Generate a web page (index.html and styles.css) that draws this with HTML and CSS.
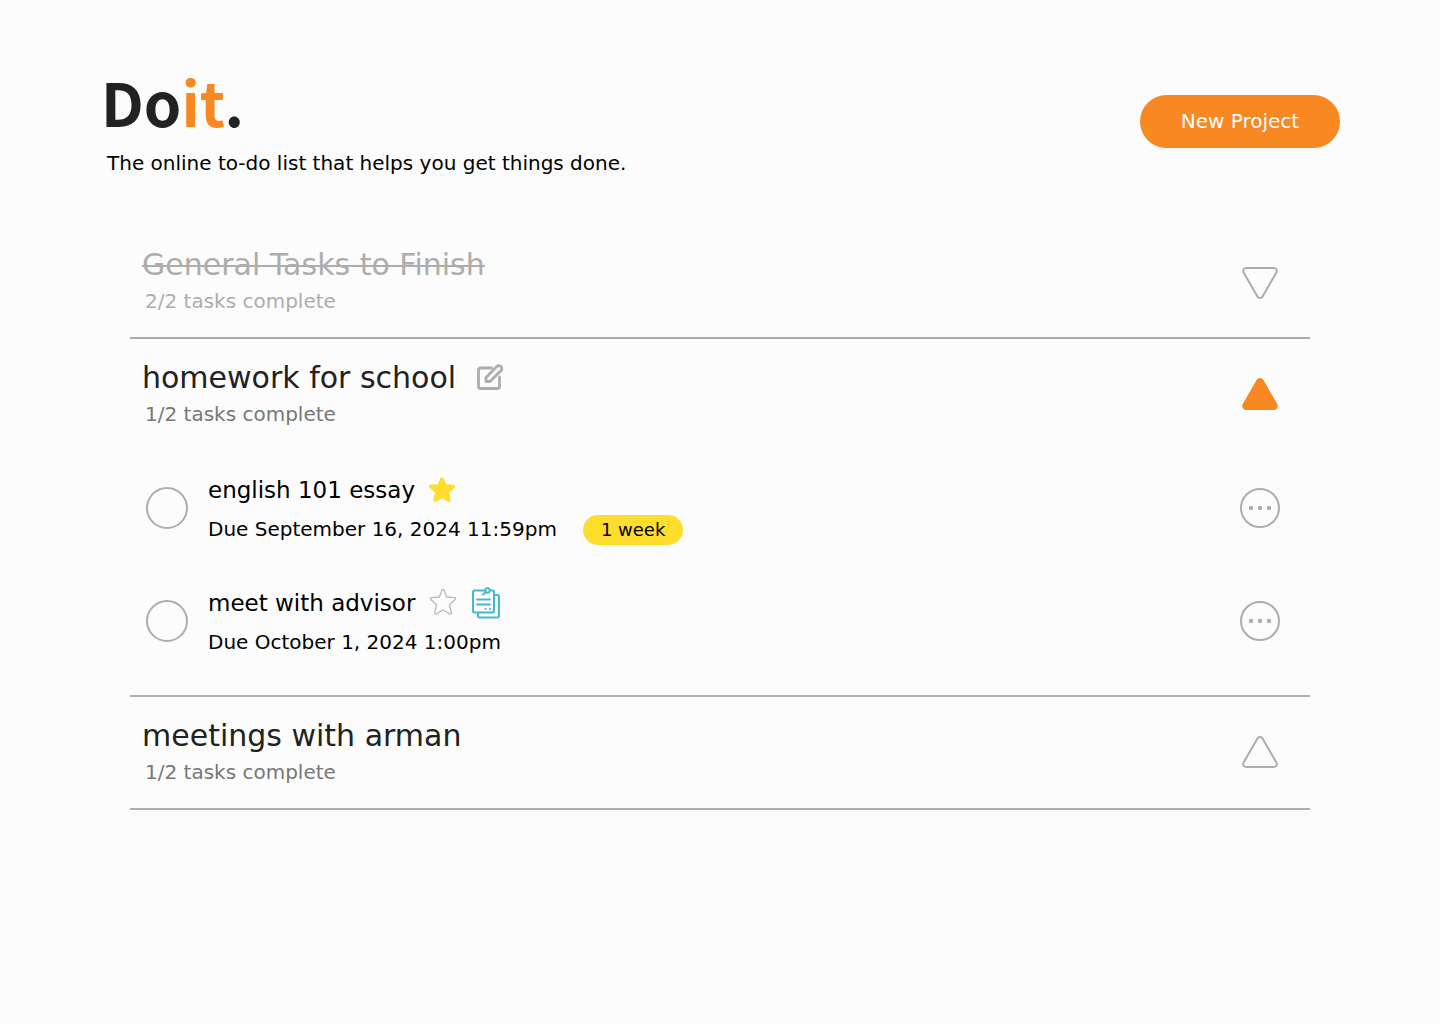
FILE: index.html
```html
<!DOCTYPE html>
<html lang="en">
<head>
<meta charset="utf-8">
<title>Doit.</title>
<link rel="stylesheet" href="styles.css">
</head>
<body>
<header class="header">
  <div>
    <h1 class="logo">Do<span class="logo-accent">it</span>.</h1>
    <p class="tagline">The online to-do list that helps you get things done.</p>
  </div>
  <button class="new-project" type="button">New Project</button>
</header>

<main class="projects">
  <section class="project">
    <div class="project-head">
      <div>
        <h2 class="project-title done">General Tasks to Finish</h2>
        <p class="project-count faded">2/2 tasks complete</p>
      </div>
      <button class="icon-button" type="button" aria-label="Expand General Tasks to Finish">
        <svg width="40" height="36" viewBox="0 -1 40 36" fill="none" stroke="#adadad" stroke-width="2"><path d="M6.2 4H33.8A3 3 0 0 1 36.4 8.500L22.600 32.400A3 3 0 0 1 17.400 32.400L3.600 8.500A3 3 0 0 1 6.200 4Z"/></svg>
      </button>
    </div>
  </section>

  <section class="project">
    <div class="project-head">
      <div>
        <div class="title-line">
          <h2 class="project-title">homework for school</h2>
          <button class="icon-button" type="button" aria-label="Edit project">
            <svg width="28" height="28" viewBox="0 1 28 28" fill="none" stroke="#adadad" stroke-width="2.800" stroke-linejoin="round" stroke-linecap="round"><path d="M15.500 5H4.500A2 2 0 0 0 2.500 7V23.500A2 2 0 0 0 4.500 25.500H21.500A2 2 0 0 0 23.500 23.500V14"/><path d="M10 18.500V14.500L20.800 3.500A2.400 2.400 0 0 1 25 7.500L14 18.500Z"/></svg>
          </button>
        </div>
        <p class="project-count">1/2 tasks complete</p>
      </div>
      <button class="icon-button" type="button" aria-label="Collapse homework for school">
        <svg width="40" height="36" viewBox="0 0 40 36" fill="#f78822" stroke="#f78822" stroke-width="2"><path d="M6.200 33H33.800A3 3 0 0 0 36.400 28.500L22.600 4.600A3 3 0 0 0 17.400 4.600L3.600 28.500A3 3 0 0 0 6.200 33Z"/></svg>
      </button>
    </div>
    <ul class="tasks">
      <li class="task">
        <input class="task-check" type="checkbox" id="task-essay">
        <div class="task-body">
          <div class="task-line">
            <label class="task-title" for="task-essay">english 101 essay</label>
            <button class="icon-button" type="button" aria-label="Remove star">
              <svg width="28" height="28" viewBox="1 0 28 28" fill="#ffdd2d" stroke="#ffdd2d" stroke-width="3.500" stroke-linejoin="round"><path d="M14 3L17 9.800L25.300 10.500L19.200 16L21 24.200L14 20.200L7 24.200L8.800 16L2.700 10.500L11 9.800Z"/></svg>
            </button>
          </div>
          <div class="due-line">
            <p class="task-due">Due September 16, 2024 11:59pm</p>
            <span class="badge">1 week</span>
          </div>
        </div>
        <button class="icon-button" type="button" aria-label="More options">
          <svg width="40" height="40" viewBox="0 0 40 40" fill="#adadad"><circle cx="20" cy="20" r="19" fill="none" stroke="#adadad" stroke-width="2"/><circle cx="11" cy="20" r="2.200"/><circle cx="20" cy="20" r="2.200"/><circle cx="29" cy="20" r="2.200"/></svg>
        </button>
      </li>
      <li class="task">
        <input class="task-check" type="checkbox" id="task-advisor">
        <div class="task-body">
          <div class="task-line">
            <label class="task-title" for="task-advisor">meet with advisor</label>
            <button class="icon-button" type="button" aria-label="Add star">
              <svg width="28" height="28" viewBox="0 1 28 28" fill="none" stroke="#b8b8b8" stroke-width="1.300" stroke-linejoin="round"><path d="M12.900 2.200Q14 0.600 15.100 2.200L17.700 9L25.600 9.600Q27.400 10.100 26.200 11.500L20.500 16.800L22.300 24.600Q22.300 26.500 20.600 25.800L14 22L7.400 25.800Q5.700 26.500 5.700 24.600L7.500 16.800L1.800 11.500Q0.600 10.100 2.400 9.600L10.300 9Z"/></svg>
            </button>
            <button class="icon-button" type="button" aria-label="Notes">
              <svg width="30" height="32" viewBox="0 0 30 32" fill="none" stroke="#45b8d1" stroke-width="2" stroke-linecap="round" stroke-linejoin="round"><path d="M13 3.500H3.500A1.500 1.500 0 0 0 2 5V24A1.500 1.500 0 0 0 3.500 25.500H21.500A1.500 1.500 0 0 0 23 24V5A1.500 1.500 0 0 0 21.500 3.500H19.500"/><path d="M24 8H26.500A1.500 1.500 0 0 1 28 9.500V29A1.500 1.500 0 0 1 26.500 30.500H8.500A1.500 1.500 0 0 1 7 29V26.500"/><path d="M6 12.500H19M6 17.500H19" stroke-width="1.800"/><circle cx="16.500" cy="3.500" r="2.200"/><path d="M15 5L12 7.500"/><path d="M14.500 21.800H14.600M18.900 21.800H19"/></svg>
            </button>
          </div>
          <div class="due-line">
            <p class="task-due">Due October 1, 2024 1:00pm</p>
          </div>
        </div>
        <button class="icon-button" type="button" aria-label="More options">
          <svg width="40" height="40" viewBox="0 0 40 40" fill="#adadad"><circle cx="20" cy="20" r="19" fill="none" stroke="#adadad" stroke-width="2"/><circle cx="11" cy="20" r="2.200"/><circle cx="20" cy="20" r="2.200"/><circle cx="29" cy="20" r="2.200"/></svg>
        </button>
      </li>
    </ul>
  </section>

  <section class="project">
    <div class="project-head">
      <div>
        <h2 class="project-title">meetings with arman</h2>
        <p class="project-count">1/2 tasks complete</p>
      </div>
      <button class="icon-button" type="button" aria-label="Expand meetings with arman">
        <svg width="40" height="36" viewBox="0 0 40 36" fill="none" stroke="#adadad" stroke-width="2"><path d="M6.200 33H33.800A3 3 0 0 0 36.400 28.500L22.600 4.600A3 3 0 0 0 17.400 4.600L3.600 28.500A3 3 0 0 0 6.200 33Z"/></svg>
      </button>
    </div>
  </section>
</main>
</body>
</html>
```
FILE: styles.css
```css
* {
  box-sizing: border-box;
}

body {
  margin: 0;
  background: #fcfcfc;
  color: #000;
  font-family: Verdana, "DejaVu Sans", sans-serif;
  font-size: 20px;
  line-height: 32px;
}

h1, h2, p, ul {
  margin: 0;
  padding: 0;
}

button {
  font: inherit;
  border: 0;
  padding: 0;
  cursor: pointer;
}

.header {
  display: flex;
  justify-content: space-between;
  align-items: center;
  padding: 65px 100px 0;
}

.logo {
  padding-left: 1px;
  font-family: "Noto Sans CJK JP", sans-serif;
  font-size: 60px;
  font-weight: 700;
  line-height: 72px;
  color: #222;
}

.logo-accent {
  color: #f78822;
}

.tagline {
  margin-top: 10px;
  padding-left: 7px;
}

.new-project {
  margin-bottom: 2px;
  padding: 10px 40px 11px;
  min-width: 200px;
  border-radius: 27px;
  background: #f78822;
  color: #fff;
}

.projects {
  margin: 47px 130px 0;
}

.project {
  border-bottom: 2px solid #adadad;
}

.project-head {
  display: flex;
  justify-content: space-between;
  align-items: center;
  padding: 19px 30px 20px 12px;
}

.title-line {
  display: flex;
  align-items: center;
  gap: 20px;
}

.project-title {
  font-size: 30px;
  font-weight: 400;
  line-height: 40px;
  color: #222;
}

.project-title.done {
  color: #adadad;
  text-decoration: line-through;
  text-decoration-thickness: 2px;
}

.project-count {
  padding-left: 3px;
  color: #777;
}

.project-count.faded {
  color: #adadad;
}

.icon-button {
  display: flex;
  background: none;
}

.tasks {
  display: grid;
  gap: 1px;
  list-style: none;
  padding: 2px 30px 18px 16px;
}

.task {
  display: flex;
  align-items: center;
  gap: 20px;
}

.task-check {
  appearance: none;
  width: 42px;
  height: 42px;
  margin: 0;
  border: 2px solid #adadad;
  border-radius: 50%;
}

.task-check:checked {
  background: #adadad;
}

.task-body {
  flex: 1;
  padding: 22px 0 19px;
}

.task-line {
  display: flex;
  align-items: center;
  gap: 14px;
  margin-bottom: 7px;
}

.task-title {
  font-size: 23px;
}

.due-line {
  display: flex;
  align-items: center;
  gap: 26px;
}

.badge {
  margin-top: 2px;
  padding: 0 18px;
  border-radius: 15px;
  background: #ffdd2d;
  font-size: 18px;
  line-height: 30px;
}
```
